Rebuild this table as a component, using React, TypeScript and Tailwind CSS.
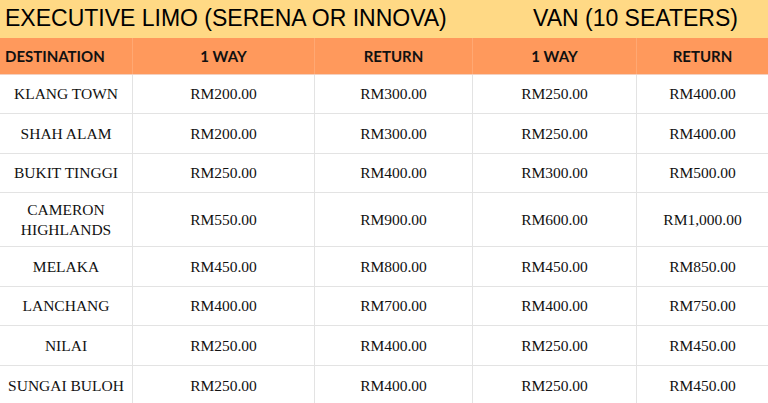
import React from "react";

const rows: { d: string[]; v: string[]; h: string }[] = [
  { d: ["KLANG TOWN"], v: ["RM200.00", "RM300.00", "RM250.00", "RM400.00"], h: "h-[39px]" },
  { d: ["SHAH ALAM"], v: ["RM200.00", "RM300.00", "RM250.00", "RM400.00"], h: "h-[40px]" },
  { d: ["BUKIT TINGGI"], v: ["RM250.00", "RM400.00", "RM300.00", "RM500.00"], h: "h-[39px]" },
  { d: ["CAMERON", "HIGHLANDS"], v: ["RM550.00", "RM900.00", "RM600.00", "RM1,000.00"], h: "h-[54px]" },
  { d: ["MELAKA"], v: ["RM450.00", "RM800.00", "RM450.00", "RM850.00"], h: "h-[40px]" },
  { d: ["LANCHANG"], v: ["RM400.00", "RM700.00", "RM400.00", "RM750.00"], h: "h-[39px]" },
  { d: ["NILAI"], v: ["RM250.00", "RM400.00", "RM250.00", "RM450.00"], h: "h-[40px]" },
  { d: ["SUNGAI BULOH"], v: ["RM250.00", "RM400.00", "RM250.00", "RM450.00"], h: "h-[40px]" },
];

const widths = ["w-[133px]", "w-[182px]", "w-[158px]", "w-[164px]", "w-[131px]"];

export default function App() {
  return (
    <div className="w-[768px] h-[403px] overflow-hidden bg-white">
      <div className="flex h-[38px] items-center pb-[2px] bg-[#ffd985] text-[23px] text-black font-['Liberation_Sans',Arial,sans-serif]">
        <div className="w-[533px] pl-[5px] leading-none">EXECUTIVE LIMO (SERENA OR INNOVA)</div>
        <div className="leading-none">VAN (10 SEATERS)</div>
      </div>
      <div className="flex h-[37px] bg-[#ff995c] border-b border-[#f3d0c0] font-['Lato',sans-serif] font-bold text-[15px] text-[#111]">
        <div className={`${widths[0]} flex items-center pl-[5px] border-r border-[#ffa873]`}>DESTINATION</div>
        <div className={`${widths[1]} flex items-center justify-center border-r border-[#ffa873]`}>1 WAY</div>
        <div className={`${widths[2]} flex items-center justify-center border-r border-[#ffa873]`}>RETURN</div>
        <div className={`${widths[3]} flex items-center justify-center border-r border-[#ffa873]`}>1 WAY</div>
        <div className={`${widths[4]} flex items-center justify-center`}>RETURN</div>
      </div>
      {rows.map((r, i) => (
        <div key={i} className={`flex ${r.h} border-b border-[#e3e3e3] font-['Liberation_Serif','Times_New_Roman',serif] text-[15.5px] text-[#111]`}>
          <div className={`${widths[0]} flex flex-col items-center justify-center border-r border-[#e3e3e3] leading-[20px] text-center`}>
            {r.d.map((t) => (
              <span key={t}>{t}</span>
            ))}
          </div>
          {r.v.map((v, j) => (
            <div key={j} className={`${widths[j + 1]} flex items-center justify-center ${j < 3 ? "border-r border-[#e3e3e3]" : ""}`}>
              {v}
            </div>
          ))}
        </div>
      ))}
    </div>
  );
}
